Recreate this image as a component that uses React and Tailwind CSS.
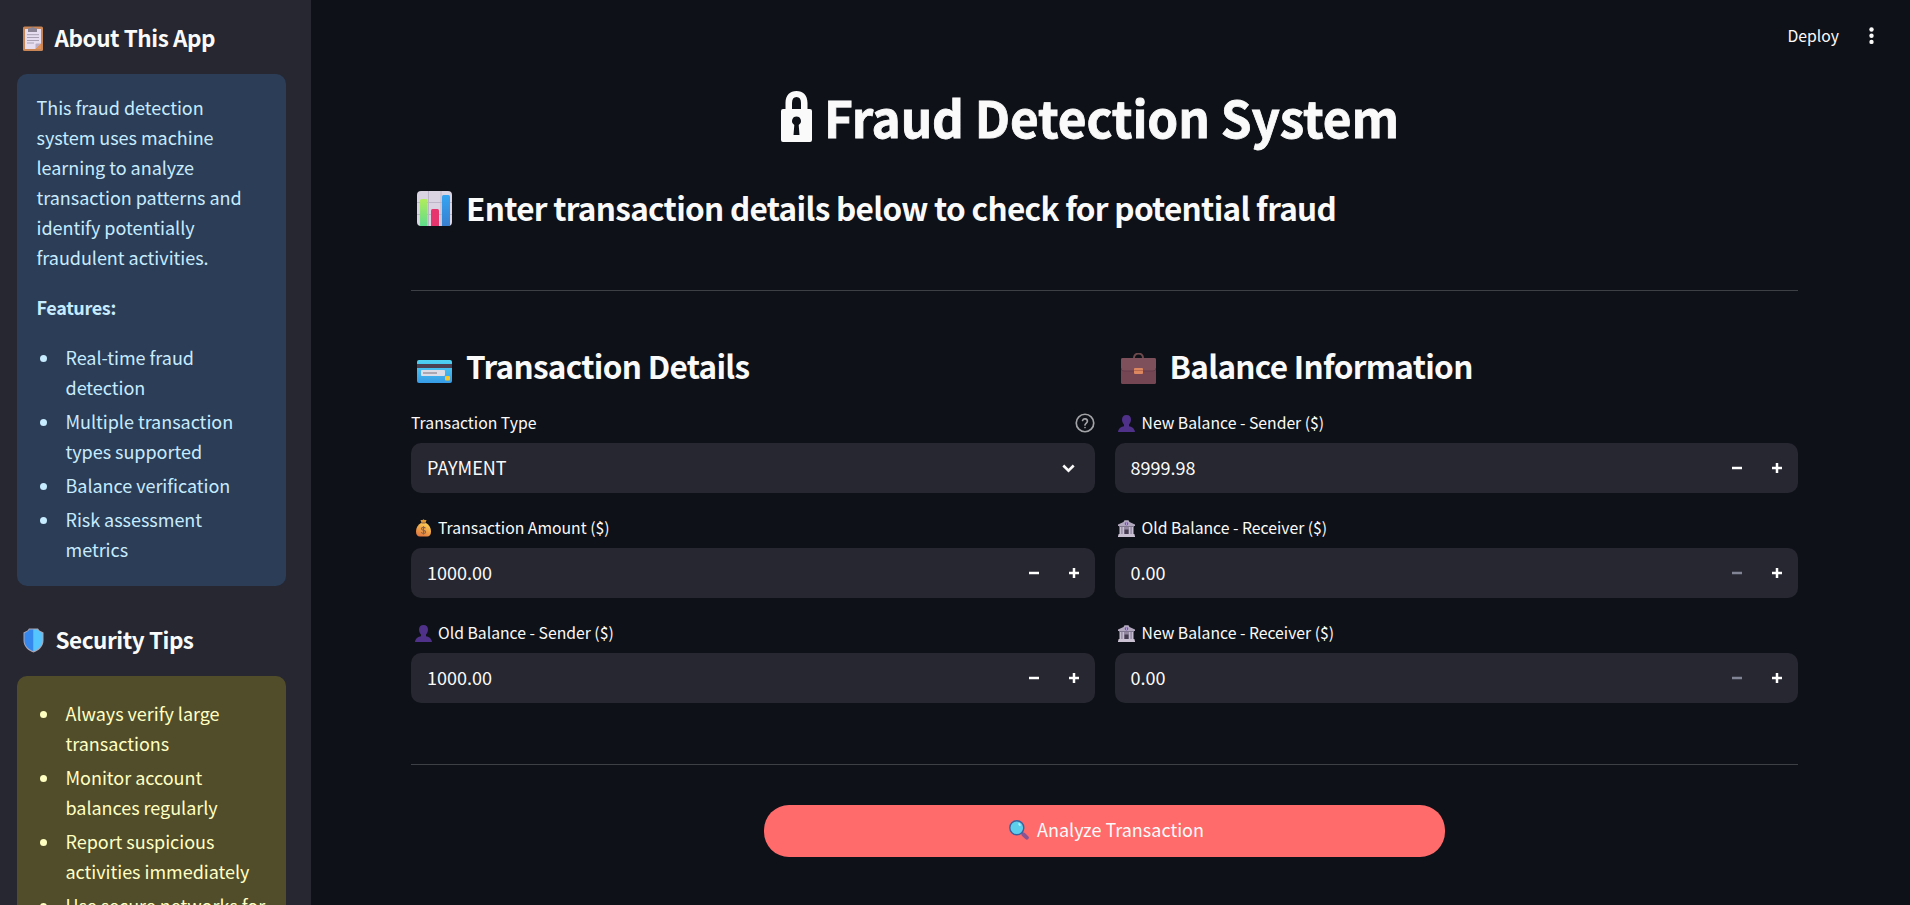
import React from "react";

function Svg({ className, viewBox, children }) {
  return (
    <svg className={"block shrink-0 " + className} viewBox={viewBox} fill="none" aria-hidden="true">
      {children}
    </svg>
  );
}

function ClipboardIcon() {
  return (
    <Svg className="w-5 h-[25px]" viewBox="0 0 20 25">
      <rect x="0" y="0.5" width="20" height="24.5" rx="1.5" fill="#c98555" />
      <path d="M2 3h16v14.5L12.5 23H2z" fill="#e6def0" />
      <path d="M12.5 23v-4.5a1 1 0 0 1 1-1H18z" fill="#b9aec8" />
      <path d="M12.5 23 18 17.5V23z" fill="#e0935a" />
      <path d="M5 6V3a1 1 0 0 1 1-1h2a2 2 0 0 1 3.400 0H13a1 1 0 0 1 1 1v3z" fill="#8b8495" />
      <path d="M4 8.700h12M4 11.500h12M4 14.500h12M4 17h7" stroke="#a9a0b4" strokeWidth="1" />
    </Svg>
  );
}

function ShieldIcon() {
  return (
    <Svg className="w-[21px] h-[25px]" viewBox="0 0 21 25">
      <path d="M6 .5h9l1.500 2L20.500 4.500v8c0 6-5 10.500-10 12-5-1.500-10-6-10-12v-8L4.500 2.500z" fill="#a9a5b5" />
      <path d="M6.500 1.500h4V23.300c-4.600-1.700-9-5.600-9-10.800V5.200L5.200 3z" fill="#3589ee" />
      <path d="M14.500 1.500h-4V23.300c4.600-1.700 9-5.600 9-10.800V5.200L15.800 3z" fill="#55c5ff" />
    </Svg>
  );
}

function ChartIcon() {
  return (
    <Svg className="mb-0.5 w-[35px] h-[35px]" viewBox="0 0 35 35">
      <defs>
        <linearGradient id="bar-green" x1="0" y1="0" x2="0" y2="1">
          <stop offset="0" stopColor="#b2ec5c" />
          <stop offset="1" stopColor="#5fdc8c" />
        </linearGradient>
        <linearGradient id="bar-blue" x1="0" y1="0" x2="0" y2="1">
          <stop offset="0" stopColor="#34a5f2" />
          <stop offset="1" stopColor="#3a7fd0" />
        </linearGradient>
      </defs>
      <rect width="35" height="35" rx="4" fill="#d9d3e2" />
      <path d="M11.500 0v35M24 0v35M0 11.500h35M0 23.500h35" stroke="#bdb6c8" strokeWidth="1" />
      <path d="M3 35V9.500A1.500 1.500 0 0 1 4.500 8H9a1.500 1.500 0 0 1 1.500 1.500V35z" fill="url(#bar-green)" />
      <path d="M14 35V19.500a1.500 1.500 0 0 1 1.500-1.500h5a1.500 1.500 0 0 1 1.500 1.500V35z" fill="#e6346f" />
      <path d="M25 35V5.500A1.500 1.500 0 0 1 26.500 4h5A1.500 1.500 0 0 1 33 5.500V35z" fill="url(#bar-blue)" />
    </Svg>
  );
}

function CardIcon() {
  return (
    <Svg className="mt-[9px] w-[35px] h-[23px]" viewBox="0 0 35 23">
      <defs>
        <linearGradient id="card-blue" x1="0" y1="0" x2="0" y2="1">
          <stop offset="0" stopColor="#4fd3f2" />
          <stop offset="1" stopColor="#379be6" />
        </linearGradient>
      </defs>
      <rect width="35" height="23" rx="2" fill="url(#card-blue)" />
      <rect y="4" width="35" height="4" fill="#4b4152" />
      <rect x="4" y="10" width="24" height="6" rx="1" fill="#dcdce6" />
      <rect x="6" y="12" width="14" height="2" fill="#aaa6b2" />
      <rect x="28" y="16" width="5" height="4.500" rx="1" fill="#f4c62f" />
    </Svg>
  );
}

function BriefcaseIcon() {
  return (
    <Svg className="mt-0.5 w-[35px] h-[31px]" viewBox="0 0 35 31">
      <path d="M13 5.500V5a4.500 4.500 0 0 1 9 0v.5" stroke="#6f4a4d" strokeWidth="2" />
      <rect y="5" width="35" height="26" rx="1.500" fill="#744553" />
      <path d="M0 7a2 2 0 0 1 2-2h31a2 2 0 0 1 2 2v8a3 3 0 0 1-3 3H3a3 3 0 0 1-3-3z" fill="#7e505b" />
      <path d="M0 15a3 3 0 0 0 3 3h29a3 3 0 0 0 3-3" stroke="#643c4b" strokeWidth="1" />
      <rect x="13" y="15" width="9" height="6" rx="1" fill="#dd8760" />
      <path d="M13 17.500h9" stroke="#b9684d" strokeWidth="1" />
    </Svg>
  );
}

function MoneyBagIcon() {
  return (
    <Svg className="w-[17px] h-[18px]" viewBox="0 0 17 18">
      <defs>
        <linearGradient id="bag" x1="0.800" y1="0" x2="0.300" y2="1">
          <stop offset="0" stopColor="#ffd454" />
          <stop offset="1" stopColor="#e07840" />
        </linearGradient>
      </defs>
      <path d="M5.500 1h2L8.500.2 9.500 1h2L10.500 4h-4z" fill="#e09a35" />
      <path d="M6 4h5c3 2 5 4.500 5 8.500 0 3.500-1.500 5-4 5H5c-2.500 0-4-1.500-4-5C1 8.500 3 6 6 4z" fill="url(#bag)" />
      <path d="M6.500 4h4" stroke="#7a5148" strokeWidth="0.900" />
      <path d="M10.400 9.300C10 8.500 9.400 8.200 8.500 8.200c-1.200 0-2 .6-2 1.500 0 2.300 4.100 1 4.100 3.200 0 1-.9 1.600-2.100 1.600-1.100 0-1.900-.4-2.200-1.300M8.500 7.200v8.300" stroke="#8a5f48" strokeWidth="1.100" />
    </Svg>
  );
}

function PersonIcon() {
  return (
    <Svg className="w-[17px] h-[17px]" viewBox="0 0 17 17">
      <path d="M8.500 0C11.500 0 13 1.800 13 4.500c0 2-.8 3.900-2 5v1.800c2.700.4 5.300 1.800 6 5.700H0c.7-3.900 3.300-5.300 6-5.700V9.500c-1.200-1.100-2-3-2-5C4 1.800 5.500 0 8.500 0z" fill="#4f3189" />
    </Svg>
  );
}

function BankIcon() {
  return (
    <Svg className="w-[17px] h-[17px]" viewBox="0 0 17 17">
      <path d="M6.500.3h4l1 1.700L17 4.500V6H0V4.500L5.500 2z" fill="#b3a9bf" />
      <path d="M1 6h15v1H1z" fill="#81768f" />
      <path d="M1.500 7h14v8h-14z" fill="#91869e" />
      <path d="M2.500 7v8M5.300 7v8M11.700 7v8M14.500 7v8" stroke="#c6bdd0" strokeWidth="1.500" />
      <rect x="6.500" y="9.500" width="4" height="5" fill="#463d50" />
      <path d="M.5 14h16v1.500h.5V17H0v-1.500h.5z" fill="#cac1d3" />
      <circle cx="8.500" cy="3.700" r="1.800" fill="#7c52b5" />
      <path d="M8.500 2.400v2.600" stroke="#c9bfe0" strokeWidth="0.700" />
    </Svg>
  );
}

function MagnifierIcon() {
  return (
    <Svg className="mb-0.5 w-5 h-5" viewBox="0 0 20 20">
      <path d="M12.300 12.300 14 14" stroke="#5b5a86" strokeWidth="2" />
      <path d="M14.500 14.500 17.800 17.600" stroke="#8a5391" strokeWidth="4" strokeLinecap="round" />
      <circle cx="7.800" cy="7.800" r="7" fill="#5dcfec" stroke="#3a62a0" strokeWidth="1.400" />
      <ellipse cx="10.500" cy="4.500" rx="1" ry="1.600" transform="rotate(-35 10.500 4.500)" fill="#b8efff" />
    </Svg>
  );
}

function LockIcon() {
  return (
    <Svg className="mb-1 w-[31px] h-[51px]" viewBox="0 0 31 51">
      <path
        fillRule="evenodd"
        d="M4.500 18V12C4.500 4 9 0 15.500 0S26.500 4 26.500 12v6H29a2 2 0 0 1 2 2v29a2 2 0 0 1-2 2H2a2 2 0 0 1-2-2V20a2 2 0 0 1 2-2zM11 18h9v-6c0-4-1.500-6-4.500-6S11 8 11 12zM15.500 25.500a4.500 4.500 0 0 0-2.200 8.400L12.500 44h6l-.8-10.100a4.500 4.500 0 0 0-2.200-8.400z"
        fill="#fafafa"
      />
    </Svg>
  );
}

function Heading({ icon, children }) {
  return (
    <h2 className="flex h-[42px] items-center gap-3.5 pl-1.5 text-[31.5px] font-semibold leading-[42px] tracking-[-0.7px]">
      {icon}
      <span className="whitespace-nowrap pb-1">{children}</span>
    </h2>
  );
}

function Label({ icon, children, help }) {
  return (
    <div className="flex h-[30px] items-center text-[15.75px] leading-[30px]">
      {icon && <span className="ml-[3.5px] mr-[6.5px]">{icon}</span>}
      <span className="whitespace-nowrap">{children}</span>
      {help && (
        <Svg className="ml-auto h-5 w-5" viewBox="0 0 24 24">
          <circle cx="12" cy="12" r="10.500" stroke="#a3a4a8" strokeWidth="2" />
          <path d="M9.100 9a3 3 0 0 1 5.800 1c0 2-2.900 2.600-2.900 4.300M12 17.500h.01" stroke="#a3a4a8" strokeWidth="2" strokeLinecap="round" />
        </Svg>
      )}
    </div>
  );
}

function NumberField({ icon, label, value, minDisabled }) {
  return (
    <div>
      <Label icon={icon}>{label}</Label>
      <div className="mt-[5px] flex h-[50px] items-center rounded-[10px] bg-[#262730] pl-4 pr-px text-lg">
        <span className="flex-1 pb-[3px]">{value}</span>
        <span className="flex w-10 justify-center">
          <Svg className="h-2.5 w-2.5" viewBox="0 0 10 10">
            <path d="M0 5h10" stroke={minDisabled ? "#808495" : "#ffffff"} strokeWidth="2.500" />
          </Svg>
        </span>
        <span className="flex w-10 justify-center">
          <Svg className="h-2.5 w-2.5" viewBox="0 0 10 10">
            <path d="M0 5h10M5 0v10" stroke="#ffffff" strokeWidth="2.500" />
          </Svg>
        </span>
      </div>
    </div>
  );
}

function Bullets({ items }) {
  return (
    <ul className="flex flex-col gap-1">
      {items.map((lines) => (
        <li key={lines[0]} className="flex">
          <span className="ml-[3px] mt-[13.5px] h-[7px] w-[7px] shrink-0 rounded-full bg-current" />
          <span className="ml-[19px]">
            {lines.map((line) => (
              <span key={line} className="block whitespace-nowrap">
                {line}
              </span>
            ))}
          </span>
        </li>
      ))}
    </ul>
  );
}

function SidebarHeading({ icon, children }) {
  return (
    <h3 className="flex h-[30px] items-center gap-[11.5px] pl-1.5 text-[22.5px] font-semibold leading-[30px] tracking-[-0.45px]">
      {icon}
      <span className="whitespace-nowrap pb-0.5">{children}</span>
    </h3>
  );
}

function Sidebar() {
  const about = [
    "This fraud detection",
    "system uses machine",
    "learning to analyze",
    "transaction patterns and",
    "identify potentially",
    "fraudulent activities.",
  ];
  return (
    <aside className="h-full w-[311px] shrink-0 overflow-hidden bg-[#262730] pl-[17px] pr-[25px] pt-[23px]">
      <SidebarHeading icon={<ClipboardIcon />}>About This App</SidebarHeading>
      <div className="mt-[21px] rounded-[10px] bg-[#2b3d57] pb-[22.5px] pl-[19.5px] pt-[17.5px] text-lg leading-[30px] tracking-[-0.03px] text-[#c7ebff]">
        {about.map((line) => (
          <p key={line} className="whitespace-nowrap">
            {line}
          </p>
        ))}
        <p className="my-5 font-semibold tracking-[-0.35px]">Features:</p>
        <Bullets
          items={[
            ["Real-time fraud", "detection"],
            ["Multiple transaction", "types supported"],
            ["Balance verification"],
            ["Risk assessment", "metrics"],
          ]}
        />
      </div>
      <div className="mt-[39px]">
        <SidebarHeading icon={<ShieldIcon />}>Security Tips</SidebarHeading>
      </div>
      <div className="mt-[21px] rounded-[10px] bg-[#514d2b] pb-[22.5px] pl-[19.5px] pt-[21.5px] text-lg leading-[30px] tracking-[-0.03px] text-[#ffffc2]">
        <Bullets
          items={[
            ["Always verify large", "transactions"],
            ["Monitor account", "balances regularly"],
            ["Report suspicious", "activities immediately"],
            ["Use secure networks for"],
          ]}
        />
      </div>
    </aside>
  );
}

export default function App() {
  return (
    <div className="flex h-screen overflow-hidden bg-[#0e1117] font-['Noto_Sans_CJK_SC',sans-serif] text-[#fafafa]">
      <Sidebar />
      <main className="flex-1 pl-[100px] pr-28">
        <header className="-mr-20 flex h-[72px] items-center justify-end gap-[30px] pr-1 text-[15.75px]">
          <span>Deploy</span>
          <Svg className="h-5 w-[5px]" viewBox="0 0 5 20">
            <circle cx="2.500" cy="3.500" r="2.200" fill="#fafafa" />
            <circle cx="2.500" cy="9.700" r="2.200" fill="#fafafa" />
            <circle cx="2.500" cy="15.900" r="2.200" fill="#fafafa" />
          </Svg>
        </header>
        <h1 className="mt-[13px] flex h-[66px] items-center gap-3 pl-[370px] text-[49.5px] font-bold leading-[66px] tracking-[-0.15px]">
          <LockIcon />
          <span className="whitespace-nowrap pb-0.5 [-webkit-text-stroke:0.8px_#fafafa]">Fraud Detection System</span>
        </h1>
        <div className="mt-[37px]">
          <Heading icon={<ChartIcon />}>Enter transaction details below to check for potential fraud</Heading>
        </div>
        <hr className="mt-[60px] border-[#3d4044]" />
        <div className="mt-[55px] grid grid-cols-2 gap-5">
          <section>
            <Heading icon={<CardIcon />}>Transaction Details</Heading>
            <div className="mt-5 flex flex-col gap-5">
              <div>
                <Label help>Transaction Type</Label>
                <div className="mt-[5px] flex h-[50px] items-center justify-between rounded-[10px] bg-[#262730] pl-4 pr-5 text-lg">
                  <span className="pb-[3px]">PAYMENT</span>
                  <Svg className="h-[9px] w-[13px]" viewBox="0 0 13 9">
                    <path d="m1.300 1.500 5.200 5.200 5.200-5.200" stroke="#fafafa" strokeWidth="2.600" />
                  </Svg>
                </div>
              </div>
              <NumberField icon={<MoneyBagIcon />} label="Transaction Amount ($)" value="1000.00" />
              <NumberField icon={<PersonIcon />} label="Old Balance - Sender ($)" value="1000.00" />
            </div>
          </section>
          <section>
            <Heading icon={<BriefcaseIcon />}>Balance Information</Heading>
            <div className="mt-5 flex flex-col gap-5">
              <NumberField icon={<PersonIcon />} label="New Balance - Sender ($)" value="8999.98" />
              <NumberField icon={<BankIcon />} label="Old Balance - Receiver ($)" value="0.00" minDisabled />
              <NumberField icon={<BankIcon />} label="New Balance - Receiver ($)" value="0.00" minDisabled />
            </div>
          </section>
        </div>
        <hr className="mt-[61px] border-[#3d4044]" />
        <button className="mx-auto mt-10 flex h-[52px] w-[681px] items-center justify-center gap-2 rounded-[25px] bg-[#ff6b6b] pl-1 text-lg">
          <MagnifierIcon />
          <span className="pb-1">Analyze Transaction</span>
        </button>
      </main>
    </div>
  );
}
